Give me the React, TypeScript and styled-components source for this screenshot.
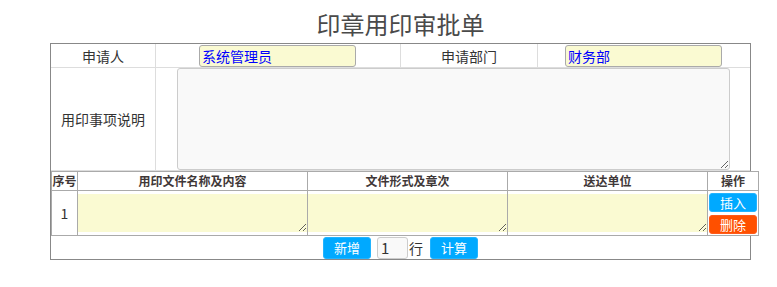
import React, { useState } from 'react';
import styled, { createGlobalStyle } from 'styled-components';

const GlobalStyle = createGlobalStyle`
  body {
    margin: 8px;
    background: #fff;
    font-family: "Noto Sans CJK SC", "Liberation Sans", sans-serif;
    color: #333;
  }
`;

const Page = styled.div`
  margin-left: 42px;
  width: 701px;
`;

const Title = styled.div`
  height: 35px;
  line-height: 32px;
  text-align: center;
  font-size: 24px;
  color: #4a4a4a;
`;

const FormBox = styled.div`
  box-sizing: border-box;
  width: 701px;
  border: 1px solid #888;
`;

const InfoRow = styled.div`
  display: grid;
  grid-template-columns: 105px 245px 137px 1fr;
  height: 24px;
`;

const NoteRow = styled.div`
  display: grid;
  grid-template-columns: 105px 1fr;
  height: 103px;
`;

const Cell = styled.div<{ $last?: boolean }>`
  box-sizing: border-box;
  display: flex;
  align-items: center;
  justify-content: center;
  border-bottom: 1px solid #ddd;
  border-right: ${({ $last }) => ($last ? 'none' : '1px solid #ddd')};
  font-size: 14px;
  color: #333;
`;

const InputCell = styled(Cell)`
  align-items: flex-start;
  padding-top: 1px;
  padding-right: 1px;
`;

const NoteCell = styled(Cell)`
  align-items: flex-start;
`;

const TextInput = styled.input`
  box-sizing: border-box;
  width: 157px;
  height: 22px;
  padding: 0 2px;
  border: 1px solid #aaa;
  border-radius: 3px;
  background: #fafad2;
  color: #00f;
  font-family: inherit;
  font-size: 14px;
  outline: none;
`;

const NoteArea = styled.textarea`
  box-sizing: border-box;
  width: 553px;
  height: 102px;
  margin: 0;
  border: 1px solid #ccc;
  border-radius: 3px;
  background: #f9f9f9;
  font-family: inherit;
  font-size: 14px;
  outline: none;
`;

const DetailGrid = styled.div`
  box-sizing: border-box;
  width: 708px;
  display: grid;
  grid-template-columns: 26px 230px 200px 200px 1fr;
  grid-template-rows: 19px 45px;
  border-top: 1px solid #aaa;
  border-left: 1px solid #aaa;
  background: #fff;
  position: relative;
`;

const HeadCell = styled.div`
  box-sizing: border-box;
  border-right: 1px solid #aaa;
  border-bottom: 1px solid #aaa;
  font-size: 12px;
  font-weight: bold;
  color: #3f3838;
  text-align: center;
  line-height: 18px;
  white-space: nowrap;
  overflow: hidden;
`;

const BodyCell = styled.div`
  box-sizing: border-box;
  display: flex;
  align-items: center;
  justify-content: center;
  border-right: 1px solid #aaa;
  border-bottom: 1px solid #aaa;
  font-size: 14px;
  color: #333;
`;

const ActionCell = styled(BodyCell)`
  flex-direction: column;
  align-items: flex-start;
  justify-content: flex-start;
  gap: 3px;
  padding: 2px 0 0 1px;
`;

const DetailArea = styled.textarea`
  box-sizing: border-box;
  width: 100%;
  height: 38px;
  margin: 0;
  padding: 2px;
  border: none;
  background: #fafad2;
  font-family: inherit;
  font-size: 13px;
  outline: none;
`;

const Button = styled.button<{ $tone?: 'blue' | 'red'; $h?: number }>`
  box-sizing: border-box;
  width: 48px;
  height: ${({ $h }) => $h ?? 22}px;
  padding: 0;
  border: 1px solid ${({ $tone }) => ($tone === 'red' ? '#ff5a1a' : '#22b4ff')};
  border-radius: 3px;
  background: ${({ $tone }) => ($tone === 'red' ? '#ff5000' : '#00a9ff')};
  color: #fff;
  font-family: inherit;
  font-size: 13px;
  line-height: 1;
  cursor: pointer;
`;

const Footer = styled.div`
  height: 23px;
  display: flex;
  align-items: center;
  justify-content: center;
  font-size: 14px;
  color: #333;
`;

const CountInput = styled.input`
  box-sizing: border-box;
  width: 31px;
  height: 22px;
  margin-left: 6px;
  padding: 0 3px;
  border: 1px solid #ccc;
  border-radius: 3px;
  background: #f9f9f9;
  color: #333;
  font-family: inherit;
  font-size: 15px;
  outline: none;
`;

const Unit = styled.span`
  margin: 0 7px 0 1px;
`;

type Row = { id: number };

export default function App() {
  const [rows, setRows] = useState<Row[]>([{ id: 1 }]);
  const [count, setCount] = useState('1');

  return (
    <Page>
      <GlobalStyle />
      <Title>印章用印审批单</Title>
      <FormBox>
        <InfoRow>
          <Cell>申请人</Cell>
          <InputCell>
            <TextInput defaultValue="系统管理员" />
          </InputCell>
          <Cell>申请部门</Cell>
          <InputCell $last>
            <TextInput defaultValue="财务部" />
          </InputCell>
        </InfoRow>
        <NoteRow>
          <Cell>用印事项说明</Cell>
          <NoteCell $last>
            <NoteArea />
          </NoteCell>
        </NoteRow>
        <DetailGrid>
          <HeadCell>序号</HeadCell>
          <HeadCell>用印文件名称及内容</HeadCell>
          <HeadCell>文件形式及章次</HeadCell>
          <HeadCell>送达单位</HeadCell>
          <HeadCell>操作</HeadCell>
          {rows.map((r, i) => (
            <React.Fragment key={r.id}>
              <BodyCell>{i + 1}</BodyCell>
              <BodyCell>
                <DetailArea />
              </BodyCell>
              <BodyCell>
                <DetailArea />
              </BodyCell>
              <BodyCell>
                <DetailArea />
              </BodyCell>
              <ActionCell>
                <Button $h={19}>插入</Button>
                <Button $h={19} $tone="red">删除</Button>
              </ActionCell>
            </React.Fragment>
          ))}
        </DetailGrid>
        <Footer>
          <Button onClick={() => setRows([...rows, { id: Date.now() }])}>新增</Button>
          <CountInput value={count} onChange={e => setCount(e.target.value)} />
          <Unit>行</Unit>
          <Button>计算</Button>
        </Footer>
      </FormBox>
    </Page>
  );
}
